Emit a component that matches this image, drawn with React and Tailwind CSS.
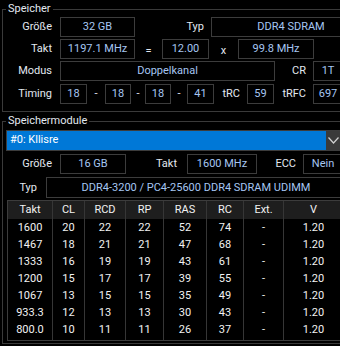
import React from "react";

const Box = ({ className = "", children }) => (
  <div
    className={
      "h-[20px] shrink-0 border border-[#3c3c3c] flex items-center justify-center text-[#a6c6f2] " +
      className
    }
  >
    {children}
  </div>
);

const Label = ({ className = "", children }) => (
  <span className={"shrink-0 text-right " + className}>{children}</span>
);

const columns = [
  { name: "Takt", w: "w-[45px]", values: ["1600", "1467", "1333", "1200", "1067", "933.3", "800.0"] },
  { name: "CL", w: "w-[32px]", values: ["20", "18", "16", "15", "13", "12", "10"] },
  { name: "RCD", w: "w-[41px]", values: ["22", "21", "19", "17", "15", "13", "11"] },
  { name: "RP", w: "w-[38px]", values: ["22", "21", "19", "17", "15", "13", "11"] },
  { name: "RAS", w: "w-[43px]", values: ["52", "47", "43", "39", "35", "30", "26"] },
  { name: "RC", w: "w-[37px]", values: ["74", "68", "61", "55", "49", "43", "37"] },
  { name: "Ext.", w: "w-[40px]", values: ["-", "-", "-", "-", "-", "-", "-"] },
  { name: "V", w: "w-[60px]", values: ["1.20", "1.20", "1.20", "1.20", "1.20", "1.20", "1.20"] },
];

export default function App() {
  return (
    <div className="w-[340px] h-[346px] overflow-hidden bg-black text-[#e2e8f0] text-[11px] font-['Roboto',sans-serif] leading-[14px]">
      {/* Speicher */}
      <fieldset className="ml-[2px] mt-[2px] w-[400px] border border-[#3a3a3a] pb-[7px]">
        <legend className="ml-[3px] px-[2px] leading-[14px]">Speicher</legend>

        <div className="mt-[1px] flex h-[20px] items-center">
          <Label className="w-[49px]">Größe</Label>
          <Box className="ml-[8px] w-[75px]">32 GB</Box>
          <Label className="w-[69px]">Typ</Label>
          <Box className="ml-[7px] w-[160px]">DDR4 SDRAM</Box>
        </div>

        <div className="mt-[2px] flex h-[20px] items-center">
          <Label className="w-[49px]">Takt</Label>
          <Box className="ml-[8px] w-[75px]">1197.1 MHz</Box>
          <span className="w-[27px] shrink-0 pt-[3px] text-center">=</span>
          <Box className="w-[47px]">12.00</Box>
          <span className="w-[29px] shrink-0 pt-[3px] text-center">x</span>
          <Box className="w-[76px]">99.8 MHz</Box>
        </div>

        <div className="mt-[2px] flex h-[20px] items-center">
          <Label className="w-[49px]">Modus</Label>
          <Box className="ml-[8px] w-[215px]">Doppelkanal</Box>
          <Label className="w-[31px]">CR</Label>
          <Box className="ml-[7px] w-[30px]">1T</Box>
        </div>

        <div className="mt-[3px] flex h-[20px] items-center">
          <Label className="w-[49px]">Timing</Label>
          <Box className="ml-[8px] w-[27px]">18</Box>
          <span className="w-[18px] shrink-0 text-center">-</span>
          <Box className="w-[26px]">18</Box>
          <span className="w-[14px] shrink-0 text-center">-</span>
          <Box className="w-[26px]">18</Box>
          <span className="w-[16px] shrink-0 text-center">-</span>
          <Box className="w-[27px]">41</Box>
          <Label className="w-[26px]">tRC</Label>
          <Box className="ml-[7px] w-[27px]">59</Box>
          <Label className="w-[32px]">tRFC</Label>
          <Box className="ml-[7px] w-[30px]">697</Box>
        </div>
      </fieldset>

      {/* Speichermodule */}
      <fieldset className="ml-[2px] mt-[2px] w-[400px] border border-[#3a3a3a] pb-[2px]">
        <legend className="ml-[3px] px-[2px] leading-[14px]">Speichermodule</legend>

        <div className="ml-[3px] mt-[2px] flex h-[21px] w-[335px] border border-[#3c3c3c] bg-[#0078d7]">
          <span className="flex-1 pl-[3px] pt-[2px] text-white">#0: Kllisre</span>
          <div className="flex w-[14px] items-center justify-center bg-[#3a3a3a]">
            <svg width="11" height="7" viewBox="0 0 11 7" fill="none">
              <polyline points="0.5,0.5 5.5,6 10.5,0.5" stroke="#d0d0d0" strokeWidth="1.2" />
            </svg>
          </div>
        </div>

        <div className="mt-[3px] flex h-[20px] items-center">
          <Label className="w-[49px]">Größe</Label>
          <Box className="ml-[8px] w-[66px]">16 GB</Box>
          <Label className="w-[51px]">Takt</Label>
          <Box className="ml-[10px] w-[70px]">1600 MHz</Box>
          <Label className="w-[39px]">ECC</Label>
          <Box className="ml-[7px] w-[40px]">Nein</Box>
        </div>

        <div className="mt-[3px] flex h-[21px] items-center">
          <Label className="w-[34px]">Typ</Label>
          <Box className="ml-[9px] h-[21px] w-[300px]">DDR4-3200 / PC4-25600 DDR4 SDRAM UDIMM</Box>
        </div>

        <div className="ml-[4px] mt-[2px] flex w-[338px] border border-[#3c3c3c] text-[#f2f2f2]">
          {columns.map((col) => (
            <div key={col.name} className={"flex shrink-0 flex-col border-r border-[#363636] pb-[2px] " + col.w}>
              <div className="flex h-[18px] items-center justify-center bg-[#1e1e1e]">{col.name}</div>
              {col.values.map((v, i) => (
                <div key={i} className="flex h-[17px] items-center justify-center">
                  {v}
                </div>
              ))}
            </div>
          ))}
        </div>
      </fieldset>
    </div>
  );
}
